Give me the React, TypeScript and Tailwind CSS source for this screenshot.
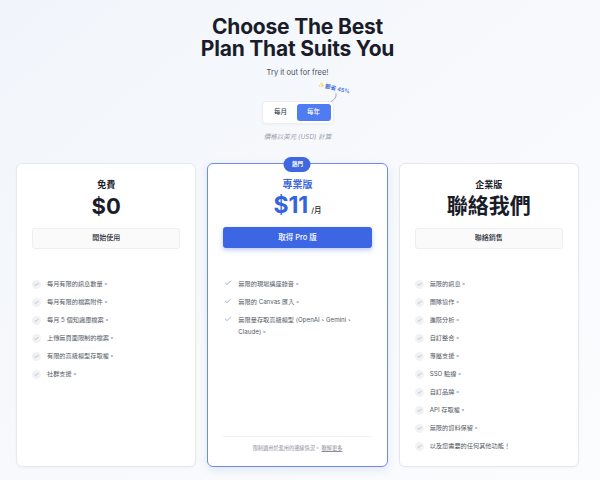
import { Check } from 'lucide-react';

const freeFeatures = [
  '每月有限的訊息數量。',
  '每月有限的檔案附件。',
  '每月 5 個知識庫檔案。',
  '上傳無頁面限制的檔案。',
  '有限的高級模型存取權。',
  '社群支援。',
];

const proFeatures = [
  '無限的現場講座錄音。',
  '無限的 Canvas 匯入。',
  '無限量存取高級模型 (OpenAI、Gemini、Claude)。',
];

const enterpriseFeatures = [
  '無限的訊息。',
  '團隊協作。',
  '進階分析。',
  '自訂整合。',
  '專屬支援。',
  'SSO 驗證。',
  '自訂品牌。',
  'API 存取權。',
  '無限的資料保留。',
  '以及您需要的任何其他功能！',
];

function CircleCheckList({ items }: { items: string[] }) {
  return (
    <ul className="mt-[26px] flex flex-col">
      {items.map((item) => (
        <li key={item} className="flex h-[18px] items-center gap-[6px]">
          <span className="flex h-[9px] w-[9px] shrink-0 items-center justify-center rounded-full bg-[#f1f2f4]">
            <Check className="h-[5px] w-[5px] text-[#9ca3af]" strokeWidth={3} />
          </span>
          <span className="text-[6.2px] leading-[10px] text-[#555a66]">{item}</span>
        </li>
      ))}
    </ul>
  );
}

export default function App() {
  return (
    <div
      className="min-h-[480px] w-full bg-gradient-to-br from-[#f1f5fb] via-[#f7f9fc] to-[#fbfcfe] pl-4 pr-[21px]"
      style={{ fontFamily: 'Inter, "Noto Sans CJK TC", sans-serif' }}
    >
      {/* Header */}
      <div className="flex flex-col items-center pt-[16px]">
        <h1 className="text-center text-[21px] font-bold leading-[22px] tracking-[-0.2px] text-[#1a1c29]">
          <span className="block">Choose The Best</span>
          <span className="block">Plan That Suits You</span>
        </h1>
        <p className="mt-[7px] text-[7.5px] leading-[12px] text-[#4b5060]">Try it out for free!</p>

        <div className="relative mt-[22px]">
          <div className="absolute left-[56px] top-[-17px] flex rotate-[12deg] items-center gap-[1px] whitespace-nowrap text-[5.5px] font-semibold text-[#3e6ae0]">
            <span className="text-[5px]">✨</span>
            <span>節省 45%</span>
          </div>
          <svg className="absolute left-[68px] top-[-8px]" width="8" height="9" viewBox="0 0 8 9" fill="none">
            <path d="M6 0.5 C6.5 4 5 6.5 1 8.5" stroke="#6b7280" strokeWidth="0.6" strokeLinecap="round" />
          </svg>
          <div className="flex h-[23px] w-[72px] items-center rounded-[4px] border border-[#eceef2] bg-white p-[2px] shadow-[0_1px_2px_rgba(0,0,0,0.03)]">
            <button className="flex h-full flex-1 items-center justify-center text-[6.5px] font-medium text-[#3a3f4c]">
              每月
            </button>
            <button className="flex h-full w-[34px] items-center justify-center rounded-[3px] bg-[#4f7cf0] text-[6.5px] font-medium text-white">
              每年
            </button>
          </div>
        </div>

        <p className="mt-[8px] text-[6.5px] italic leading-[10px] text-[#9aa0ac]">價格以美元 (USD) 計算</p>
      </div>

      {/* Cards */}
      <div className="mt-[21px] grid grid-cols-3 gap-[11px]">
        {/* Free */}
        <div className="flex flex-col rounded-[6px] border border-[#e6e8ec] bg-white px-[15px] pb-[11px] pt-[15px] shadow-[0_1px_3px_rgba(0,0,0,0.04)]">
          <h3 className="text-center text-[9px] font-bold leading-[12px] text-[#1a1c29]">免費</h3>
          <div className="mt-[3px] text-center text-[22px] font-bold leading-[24px] text-[#1a1c29]">$0</div>
          <button className="mt-[10px] h-[21px] w-full rounded-[3px] border border-[#eceef1] bg-[#fafafa] text-[7px] font-medium text-[#2a2e39]">
            開始使用
          </button>
          <CircleCheckList items={freeFeatures} />
        </div>

        {/* Pro */}
        <div className="relative flex flex-col rounded-[6px] border-[1.5px] border-[#6b8cec] bg-white px-[15px] pt-[14px] shadow-[0_3px_8px_rgba(60,90,200,0.12)]">
          <span className="absolute left-1/2 top-[-7px] flex h-[15px] w-[27px] -translate-x-1/2 items-center justify-center rounded-full bg-[#3f68e0] text-[5.5px] font-semibold text-white">
            熱門
          </span>
          <h3 className="text-center text-[10px] font-bold leading-[12px] text-[#3d66db]">專業版</h3>
          <div className="mt-[3px] flex items-baseline justify-center gap-[3px]">
            <span className="text-[23px] font-bold leading-[24px] text-[#3563e0]">$11</span>
            <span className="text-[7.5px] font-medium text-[#1a1c29]">/月</span>
          </div>
          <button className="mt-[10px] h-[21px] w-full rounded-[3px] bg-[#3c66e3] text-[7.5px] font-medium text-white shadow-[0_2px_5px_rgba(60,102,227,0.35)]">
            取得 Pro 版
          </button>
          <ul className="mt-[30px] flex flex-col gap-[6px]">
            {proFeatures.map((item) => (
              <li key={item} className="flex items-start gap-[5px]">
                <Check className="mt-[1px] h-[8px] w-[10px] shrink-0 text-[#8ea2d8]" strokeWidth={2.5} />
                <span className="text-[6.2px] leading-[12px] text-[#555a66]">{item}</span>
              </li>
            ))}
          </ul>
          <div className="mt-auto border-t border-[#eef0f3] pb-[14px] pt-[7px] text-center text-[5.2px] leading-[8px] text-[#8b909b]">
            限制適用於濫用的邊緣情況。 <span className="underline">瞭解更多</span>
          </div>
        </div>

        {/* Enterprise */}
        <div className="flex flex-col rounded-[6px] border border-[#e6e8ec] bg-white px-[15px] pb-[11px] pt-[15px] shadow-[0_1px_3px_rgba(0,0,0,0.04)]">
          <h3 className="text-center text-[9px] font-bold leading-[12px] text-[#1a1c29]">企業版</h3>
          <div className="mt-[3px] text-center text-[21px] font-bold leading-[24px] text-[#1a1c29]">聯絡我們</div>
          <button className="mt-[10px] h-[21px] w-full rounded-[3px] border border-[#eceef1] bg-[#fafafa] text-[7px] font-medium text-[#2a2e39]">
            聯絡銷售
          </button>
          <CircleCheckList items={enterpriseFeatures} />
        </div>
      </div>
    </div>
  );
}
